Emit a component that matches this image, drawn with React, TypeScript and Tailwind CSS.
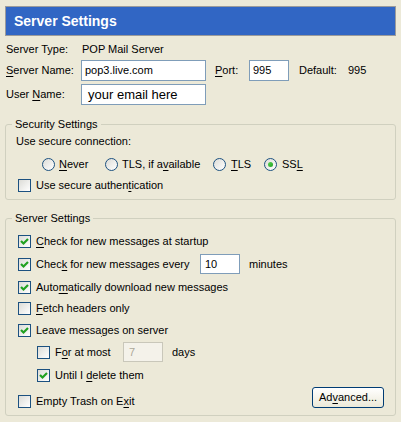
import React from 'react';

const font = { fontFamily: '"Liberation Sans", Arial, sans-serif' };

// XP-style checkbox
function Check({ checked }: { checked?: boolean }) {
    return (
        <span className="relative inline-block w-[13px] h-[13px] shrink-0 border border-[#1c5180] bg-gradient-to-br from-[#dcdcd7] to-white">
            {checked && (
                <svg className="absolute left-[1px] top-[1px]" width="9" height="9" viewBox="0 0 9 9">
                    <path d="M1 4 L3.5 6.5 L8 2" stroke="#21a121" strokeWidth="2.2" fill="none" />
                </svg>
            )}
        </span>
    );
}

function Radio({ checked }: { checked?: boolean }) {
    return (
        <span className="relative inline-flex items-center justify-center w-[13px] h-[13px] shrink-0 rounded-full border border-[#1c5180] bg-gradient-to-br from-[#dcdcd7] to-white">
            {checked && <span className="w-[5px] h-[5px] rounded-full bg-gradient-to-br from-[#55d551] to-[#21a121]" />}
        </span>
    );
}

// label with one underlined access key letter
function Key({ text, at }: { text: string; at: number }) {
    return (
        <span className="whitespace-pre">
            {text.slice(0, at)}
            <span className="underline underline-offset-2">{text[at]}</span>
            {text.slice(at + 1)}
        </span>
    );
}

function CheckRow({ checked, text, at }: { checked?: boolean; text: string; at: number }) {
    return (
        <div className="flex items-center gap-[5px] h-[16px]">
            <Check checked={checked} />
            <Key text={text} at={at} />
        </div>
    );
}

export default function App() {
    return (
        <div className="w-[401px] h-[422px] bg-[#ece9d8] text-[11px] text-black px-[5px] pt-[6px] overflow-hidden" style={font}>
            {/* Title bar */}
            <div className="h-[30px] bg-[#3166c4] border border-[#9b9b9b] flex items-center pl-[8px]">
                <span className="text-white font-bold text-[14px]">Server Settings</span>
            </div>

            {/* Server info */}
            <div className="flex items-center h-[16px] mt-[5px] pl-[1px]">
                <span className="w-[76px]">Server Type:</span>
                <span>POP Mail Server</span>
            </div>
            <div className="flex items-center h-[21px] mt-[3px] pl-[1px]">
                <span className="w-[75px]"><Key text="Server Name:" at={0} /></span>
                <div className="w-[125px] h-[21px] border border-[#7f9db9] bg-white pl-[3px] flex items-center">pop3.live.com</div>
                <span className="ml-[9px] w-[34px]"><Key text="Port:" at={0} /></span>
                <div className="w-[40px] h-[21px] border border-[#7f9db9] bg-white pl-[3px] flex items-center">995</div>
                <span className="ml-[10px] w-[49px]">Default:</span>
                <span>995</span>
            </div>
            <div className="flex items-center h-[21px] mt-[3px] pl-[1px]">
                <span className="w-[75px]"><Key text="User Name:" at={5} /></span>
                <div className="w-[125px] h-[21px] border border-[#7f9db9] bg-white pl-[6px] flex items-center text-[13px]">your email here</div>
            </div>

            {/* Security settings */}
            <fieldset className="mt-[12px] border border-[#d0d0bf] rounded-[3px] pb-[6px]">
                <legend className="ml-[6px] px-[3px] leading-[14px]">Security Settings</legend>
                <div className="pl-[12px]">
                    <div className="h-[16px] mt-[2px] flex items-center -ml-[2px]">Use secure connection:</div>
                    <div className="flex items-center h-[16px] mt-[7px] pl-[24px]">
                        <div className="w-[63px] flex items-center gap-[4px]"><Radio /><Key text="Never" at={0} /></div>
                        <div className="w-[108px] flex items-center gap-[4px]"><Radio /><Key text="TLS, if available" at={9} /></div>
                        <div className="w-[51px] flex items-center gap-[5px]"><Radio /><Key text="TLS" at={0} /></div>
                        <div className="flex items-center gap-[5px]"><Radio checked /><Key text="SSL" at={2} /></div>
                    </div>
                    <div className="mt-[5px]">
                        <CheckRow text="Use secure authentication" at={17} />
                    </div>
                </div>
            </fieldset>

            {/* Server settings */}
            <fieldset className="mt-[11px] border border-[#d0d0bf] rounded-[3px] pb-[7px]">
                <legend className="ml-[6px] px-[3px] leading-[14px]">Server Settings</legend>
                <div className="pl-[12px] pr-[11px]">
                    <div className="mt-[8px]">
                        <CheckRow checked text="Check for new messages at startup" at={0} />
                    </div>
                    <div className="mt-[5px] flex items-center h-[20px]">
                        <div className="w-[182px]"><CheckRow checked text="Check for new messages every" at={4} /></div>
                        <div className="w-[40px] h-[20px] border border-[#7f9db9] bg-white pl-[4px] flex items-center">10</div>
                        <span className="ml-[9px]">minutes</span>
                    </div>
                    <div className="mt-[5px]">
                        <CheckRow checked text="Automatically download new messages" at={4} />
                    </div>
                    <div className="mt-[5px]">
                        <CheckRow text="Fetch headers only" at={0} />
                    </div>
                    <div className="mt-[6px]">
                        <CheckRow checked text="Leave messages on server" at={11} />
                    </div>
                    <div className="mt-[4px] flex items-center h-[20px] pl-[19px]">
                        <div className="w-[86px]"><CheckRow text="For at most" at={1} /></div>
                        <div className="w-[40px] h-[20px] border border-[#c9c7ba] bg-[#f4f2ea] text-[#aca899] pl-[5px] flex items-center">7</div>
                        <span className="ml-[9px]">days</span>
                    </div>
                    <div className="mt-[5px] pl-[19px]">
                        <CheckRow checked text="Until I delete them" at={8} />
                    </div>
                    <div className="mt-[4px] flex items-start justify-between h-[21px]">
                        <div className="mt-[6px]"><CheckRow text="Empty Trash on Exit" at={16} /></div>
                        <button className="w-[72px] h-[21px] rounded-[3px] border border-[#003c74] bg-gradient-to-b from-white to-[#ece9d8] flex items-center justify-center">
                            <Key text="Advanced..." at={2} />
                        </button>
                    </div>
                </div>
            </fieldset>
        </div>
    );
}
